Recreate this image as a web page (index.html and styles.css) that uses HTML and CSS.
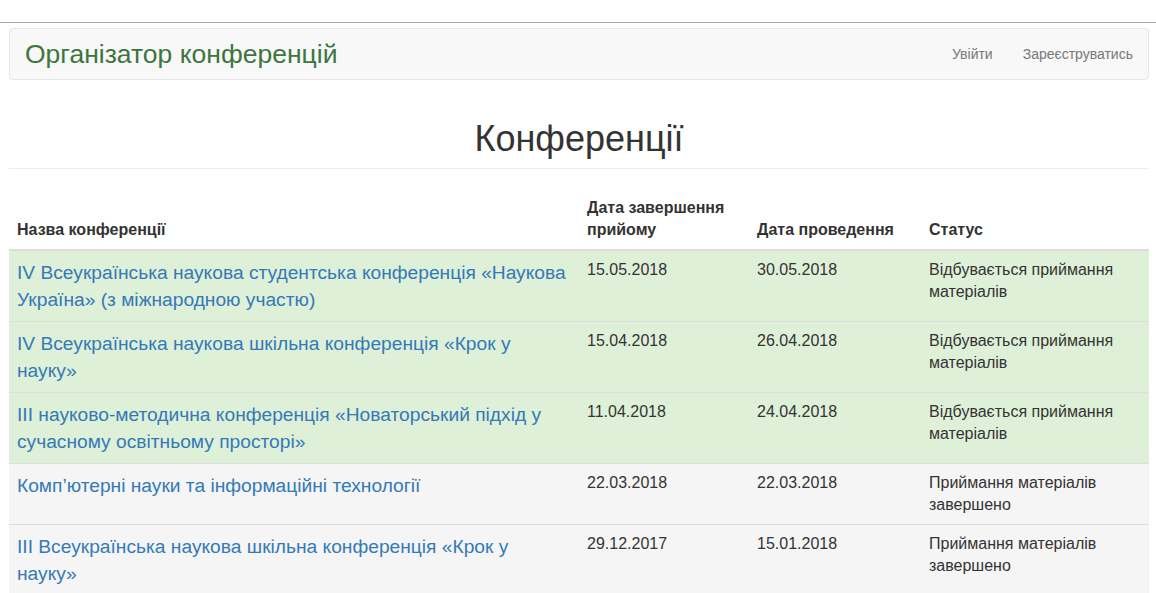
FILE: index.html
```html
<!DOCTYPE html>
<html lang="uk">
<head>
    <meta charset="UTF-8">
    <meta name="viewport" content="width=device-width, initial-scale=1.0">
    <title>Організатор конференцій</title>
    <link rel="stylesheet" href="styles.css">
</head>
<body>
    <div class="topbar"></div>
    <div class="container">
        <nav class="navbar">
            <a class="brand" href="#">Організатор конференцій</a>
            <ul class="nav">
                <li><a href="#">Увійти</a></li>
                <li><a href="#">Зареєструватись</a></li>
            </ul>
        </nav>

        <div class="page-header">
            <h1>Конференції</h1>
        </div>

        <table class="conf-table">
            <colgroup>
                <col class="col-name">
                <col class="col-end">
                <col class="col-date">
                <col class="col-status">
            </colgroup>
            <thead>
                <tr>
                    <th>Назва конференції</th>
                    <th>Дата завершення прийому</th>
                    <th>Дата проведення</th>
                    <th>Статус</th>
                </tr>
            </thead>
            <tbody>
                <tr class="success">
                    <td><a href="#">IV Всеукраїнська наукова студентська конференція «Наукова Україна» (з міжнародною участю)</a></td>
                    <td>15.05.2018</td>
                    <td>30.05.2018</td>
                    <td>Відбувається приймання матеріалів</td>
                </tr>
                <tr class="success">
                    <td><a href="#">IV Всеукраїнська наукова шкільна конференція «Крок у науку»</a></td>
                    <td>15.04.2018</td>
                    <td>26.04.2018</td>
                    <td>Відбувається приймання матеріалів</td>
                </tr>
                <tr class="success">
                    <td><a href="#">III науково-методична конференція «Новаторський підхід у сучасному освітньому просторі»</a></td>
                    <td>11.04.2018</td>
                    <td>24.04.2018</td>
                    <td>Відбувається приймання матеріалів</td>
                </tr>
                <tr class="active">
                    <td><a href="#">Комп’ютерні науки та інформаційні технології</a></td>
                    <td>22.03.2018</td>
                    <td>22.03.2018</td>
                    <td>Приймання матеріалів завершено</td>
                </tr>
                <tr class="active">
                    <td><a href="#">III Всеукраїнська наукова шкільна конференція «Крок у науку»</a></td>
                    <td>29.12.2017</td>
                    <td>15.01.2018</td>
                    <td>Приймання матеріалів завершено</td>
                </tr>
            </tbody>
        </table>
    </div>
</body>
</html>
```

FILE: styles.css
```css
body {
    margin: 0;
    background: #fff;
    font-family: 'Liberation Sans', Arial, sans-serif;
    font-size: 16px;
    line-height: 22px;
    color: #333;
}

.topbar {
    height: 22px;
    border-bottom: 1px solid #a8a8a8;
}

.container {
    width: 1140px;
    margin-left: 9px;
}

.navbar {
    margin-top: 5px;
    min-height: 50px;
    display: flex;
    justify-content: space-between;
    align-items: center;
    padding-left: 15px;
    background-color: #f8f8f8;
    border: 1px solid #e7e7e7;
    border-radius: 4px;
}

.brand {
    font-size: 26.5px;
    line-height: 50px;
    color: #3c763d;
    text-decoration: none;
}

.nav {
    list-style: none;
    margin: 0;
    padding: 0;
    display: flex;
}

.nav a {
    display: block;
    padding: 15px;
    font-size: 14px;
    line-height: 20px;
    color: #777;
    text-decoration: none;
}

.page-header {
    margin: 39px 0 20px;
    padding-bottom: 9px;
    border-bottom: 1px solid #eee;
}

.page-header h1 {
    margin: 0;
    font-size: 36px;
    font-weight: normal;
    line-height: 1.1;
    text-align: center;
}

.conf-table {
    width: 100%;
    border-collapse: collapse;
    table-layout: fixed;
}

.col-name {
    width: 570px;
}

.col-end {
    width: 170px;
}

.col-date {
    width: 172px;
}

.col-status {
    width: 228px;
}

.conf-table th {
    padding: 8px;
    text-align: left;
    vertical-align: bottom;
    font-weight: bold;
    border-bottom: 2px solid #ddd;
}

.conf-table td {
    padding: 8px;
    vertical-align: top;
    border-top: 1px solid #ddd;
}

.conf-table td a {
    font-size: 19.2px;
    line-height: 27px;
    color: #337ab7;
    text-decoration: none;
}

.conf-table tr.success td {
    background-color: #dff0d8;
}

.conf-table tr.active td {
    background-color: #f5f5f5;
}
```
